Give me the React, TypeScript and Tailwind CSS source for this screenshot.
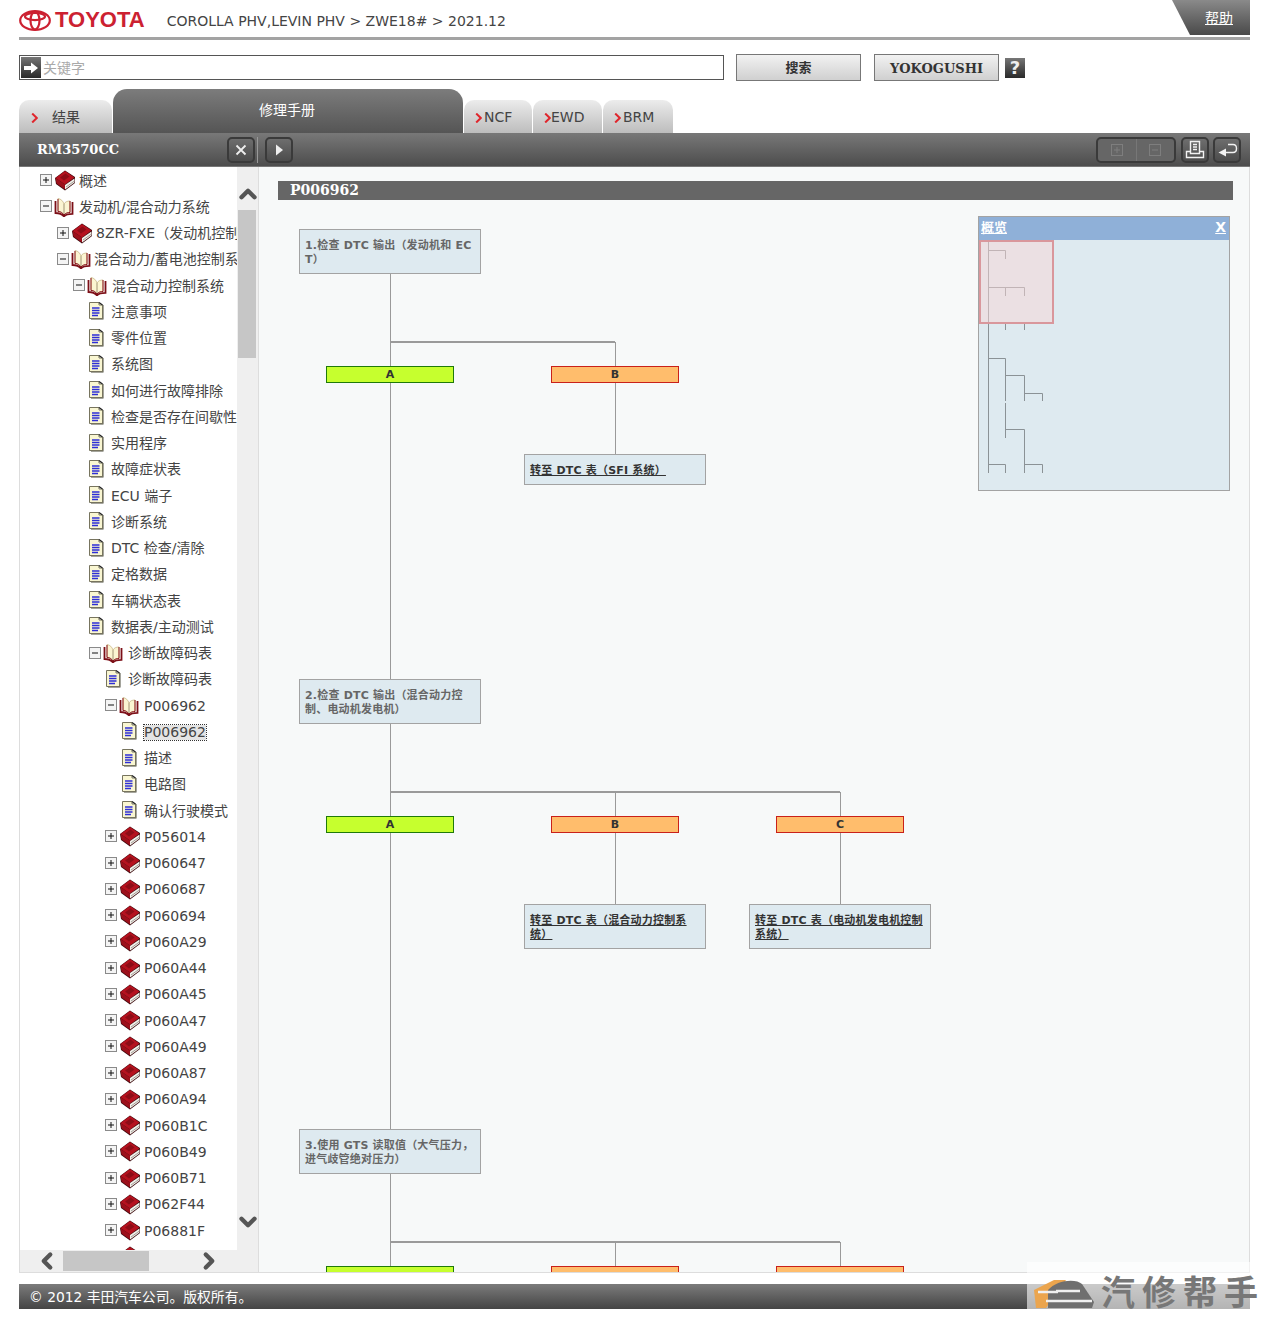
import React from "react";
import { ChevronUp, ChevronDown, ChevronLeft, ChevronRight } from "lucide-react";

type Row = { d: number; kind: "book" | "open" | "doc"; label: string; selected?: boolean };

const docs = (d: number, labels: string[]): Row[] => labels.map((label) => ({ d, kind: "doc", label }));
const books = (labels: string[]): Row[] => labels.map((label) => ({ d: 4, kind: "book", label }));

const rows: Row[] = [
  { d: 0, kind: "book", label: "概述" },
  { d: 0, kind: "open", label: "发动机/混合动力系统" },
  { d: 1, kind: "book", label: "8ZR-FXE（发动机控制" },
  { d: 1, kind: "open", label: "混合动力/蓄电池控制系" },
  { d: 2, kind: "open", label: "混合动力控制系统" },
  ...docs(2, ["注意事项", "零件位置", "系统图", "如何进行故障排除", "检查是否存在间歇性", "实用程序", "故障症状表", "ECU 端子", "诊断系统", "DTC 检查/清除", "定格数据", "车辆状态表", "数据表/主动测试"]),
  { d: 3, kind: "open", label: "诊断故障码表" },
  { d: 3, kind: "doc", label: "诊断故障码表" },
  { d: 4, kind: "open", label: "P006962" },
  { d: 4, kind: "doc", label: "P006962", selected: true },
  ...docs(4, ["描述", "电路图", "确认行驶模式"]),
  ...books(["P056014", "P060647", "P060687", "P060694", "P060A29", "P060A44", "P060A45", "P060A47", "P060A49", "P060A87", "P060A94", "P060B1C", "P060B49", "P060B71", "P062F44", "P06881F", ""]),
];

const Expander = ({ open }: { open: boolean }) => (
  <svg width="12" height="12" viewBox="0 0 12 12" className="shrink-0">
    <rect x="0.5" y="0.5" width="11" height="11" fill="#f4f4f4" stroke="#8a8a8a" />
    <path d="M3 6h6" stroke="#111" />
    {!open && <path d="M6 3v6" stroke="#111" />}
  </svg>
);

const BookIcon = () => (
  <svg width="22" height="21" viewBox="0 0 22 21" className="shrink-0">
    <path d="M1 8 L11 0.5 L21 7 L21 13 L11 20.5 L2 14 Z" fill="#3a0a0e" />
    <path d="M1.5 8 L11 1 L20.5 7.5 L11 14.5 Z" fill="#b5121f" />
    <path d="M6 7.5 L11.5 3.5 L15.5 6.5 L10 10.5 Z" fill="#8c0d17" />
    <path d="M1.5 8 L11 14.5 L11 19.5 L2.5 13.5 Z" fill="#9c101b" />
    <path d="M11 15 L20.5 8.5 L20.5 12.5 L11 19.5 Z" fill="#f2f0ea" />
    <path d="M12 17 L20 11.3" stroke="#8f8b84" strokeWidth="0.8" />
  </svg>
);

const OpenBookIcon = () => (
  <svg width="20" height="20" viewBox="0 0 20 20" className="shrink-0">
    <path d="M4 1.5 C7 2 9 4 10 7 C11 5 13 4 16 4 L16 15.5 C13.5 15.5 11.5 16 10 18 C8.5 15.5 7 14.5 4 14.5 Z" fill="#fbf5d2" stroke="#c9b98a" strokeWidth="0.8" />
    <path d="M10 7 V18" stroke="#8c7a5c" strokeWidth="0.8" />
    <path d="M4 2 V14.5 C7 14.5 8.5 16 10 18 C11.5 16 14 15.5 16 15.5 V4" fill="none" stroke="#8a1119" strokeWidth="1" />
    <path d="M1.5 4 V16 C5 16 8 17 10 19.3 C12 17 15 16.8 18.5 16.8 V5" fill="none" stroke="#7c0f17" strokeWidth="1.8" />
  </svg>
);

const DocIcon = () => (
  <svg width="15" height="18" viewBox="0 0 15 18" className="shrink-0">
    <path d="M2 17.5 H14.5 V3 H12.5 V16 H2 Z" fill="#4a4a3a" />
    <path d="M0.5 0.5 H10 L10 3 L13.5 3 V16.5 H0.5 Z" fill="#f9f6d2" stroke="#77745e" />
    <path d="M10 0.5 L13.5 3" stroke="#222" strokeWidth="1.2" />
    <path d="M3 6 H10.5 M3 8.5 H10.5 M3 11 H10.5 M3 13.5 H9" stroke="#2e2fd6" strokeWidth="1.5" />
  </svg>
);

const TreeRow = ({ row }: { row: Row }) => {
  const indent = [
    "pl-[20px]",
    "pl-[37px]",
    row.kind === "doc" ? "pl-[52px]" : "pl-[53px]",
    "pl-[69px]",
    "pl-[85px]",
  ][row.d];
  return (
    <div className={`flex h-[26.25px] items-center whitespace-nowrap ${indent}`}>
      {row.kind === "doc" ? (
        <>
          <span className="-mt-[2px] ml-[17px] mr-[7px] flex"><DocIcon /></span>
          <span className={row.selected ? "bg-[#e4e4e4] leading-[15px] outline-dotted outline-1 outline-[#333]" : ""}>{row.label}</span>
        </>
      ) : (
        <>
          <span className="-mt-[2px] flex"><Expander open={row.kind === "open"} /></span>
          <span className="-mt-[1px] ml-[2px] mr-[3px] flex w-[22px]">{row.kind === "book" ? <BookIcon /> : <OpenBookIcon />}</span>
          {row.label && <span>{row.label}</span>}
        </>
      )}
    </div>
  );
};

const ToolButton = ({ children, className = "" }: { children: React.ReactNode; className?: string }) => (
  <div className={`flex h-[26px] items-center justify-center rounded-[5px] border-2 border-[#3a3a3a] bg-linear-to-b from-[#6e6e6e] to-[#4c4c4c] ${className}`}>
    {children}
  </div>
);

const Tab = ({ label, className, gap }: { label: string; className: string; gap: string }) => (
  <div className={`flex h-[33px] items-center rounded-t-[10px] bg-linear-to-b from-[#ececec] to-[#bdbdbd] pt-[2px] text-[14px] text-[#444] ${className}`}>
    <svg width="7" height="10" viewBox="0 0 7 10" className={`shrink-0 ${gap}`}>
      <path d="M1.2 0.5 L5.8 5 L1.2 9.5" fill="none" stroke="#e0252c" strokeWidth="2" />
    </svg>
    {label}
  </div>
);

const VLine = ({ className }: { className: string }) => <div className={`absolute w-px bg-[#9a9a9a] ${className}`} />;

const Answer = ({ label, className }: { label?: string; className: string }) => (
  <div className={`absolute top-[137px] flex h-[17px] w-[128px] items-center justify-center border pt-[2px] text-[11px] font-bold text-[#333] ${className}`}>
    {label}
  </div>
);

const StepNode = ({ children }: { children: React.ReactNode }) => (
  <div className="absolute left-[40px] top-0 h-[45px] w-[182px] break-all border border-[#a3a3a3] bg-[#deeaf0] px-[5px] pt-[9px] text-[11px] font-bold leading-[14px] tracking-[0.2px] text-[#666]">
    {children}
  </div>
);

const LinkNode = ({ children, className }: { children: React.ReactNode; className: string }) => (
  <div className={`absolute top-[225px] w-[182px] break-all border border-[#a3a3a3] bg-[#deeaf0] px-[5px] pt-[9px] text-[11px] font-bold leading-[14px] tracking-[0.2px] text-[#333] underline ${className}`}>
    {children}
  </div>
);

const FlowBlock = ({ step, links, cut }: { step: string; links: string[]; cut?: boolean }) => (
  <div className="relative h-[450px]">
    <VLine className="left-[131px] top-[44px] h-[406px]" />
    <div className={`absolute left-[131px] top-[112px] h-[2px] bg-[#9a9a9a] ${links.length > 1 ? "w-[450px]" : "w-[225px]"}`} />
    <VLine className="left-[356px] top-[113px] h-[112px]" />
    {links.length > 1 && <VLine className="left-[581px] top-[113px] h-[112px]" />}
    <StepNode>{step}</StepNode>
    <Answer label={cut ? undefined : "A"} className="left-[67px] border-[#1f7a0a] bg-[#c6ff2e]" />
    <Answer label={cut ? undefined : "B"} className="left-[292px] border-[#c9211a] bg-[#ffbd6c]" />
    {links.length > 1 && <Answer label={cut ? undefined : "C"} className="left-[517px] border-[#c9211a] bg-[#ffbd6c]" />}
    {links[0] && <LinkNode className={`left-[265px] ${links.length > 1 ? "h-[45px]" : "h-[31px]"}`}>{links[0]}</LinkNode>}
    {links[1] && <LinkNode className="left-[490px] h-[45px]">{links[1]}</LinkNode>}
  </div>
);

const OverviewMap = () => (
  <svg width="250" height="250" viewBox="979 240 250 250" className="block" fill="none" stroke="#8b9296" strokeWidth="1">
    <path d="M988.5 240V473M988.5 250.5H1005.5V259M989 287.5H1024.5V296M1005.5 287V296M988.5 322.5H1024.5V330M1005.5 322V330" />
    <path d="M989 358.5H1005.5V401M1005.5 375.5H1024.5V401M1024.5 393.5H1042.5V401M1005.5 403V438M1005.5 429.5H1024.5V473M988.5 464.5H1005.5V473M1024.5 464.5H1042.5V473" />
  </svg>
);

export default function App() {
  return (
    <div className="relative h-[1322px] w-[1267px] overflow-hidden bg-white font-['DejaVu_Sans','Noto_Sans_CJK_SC',sans-serif] text-[14px] text-[#444]">
      {/* header */}
      <div className="ml-[19px] flex h-[40px] w-[1231px] items-start border-b-[3px] border-[#a3a3a3]">
        <div className="mt-[9px] flex items-center">
          <svg width="32" height="21" viewBox="0 0 32 21" fill="none" stroke="#cc2131" strokeWidth="2.2">
            <ellipse cx="16" cy="10.5" rx="14.8" ry="9.3" />
            <ellipse cx="16" cy="10.5" rx="4.5" ry="9" />
            <ellipse cx="16" cy="6.5" rx="10" ry="3.6" />
          </svg>
          <span className="ml-[4px] font-['Liberation_Sans',sans-serif] text-[22px] font-bold leading-[22px] text-[#cc2131]">TOYOTA</span>
        </div>
        <div className="ml-[22px] mt-[12px] leading-[18px] text-[#444]">COROLLA PHV,LEVIN PHV &gt; ZWE18# &gt; 2021.12</div>
        <div className="ml-auto flex h-[35px] w-[78px] items-center justify-end bg-linear-to-b from-[#8a8a8a] to-[#4a4a4a] pr-[17px] pt-[2px] text-[14px] text-white underline [clip-path:polygon(0_0,100%_0,100%_100%,18px_100%)]">
          帮助
        </div>
      </div>

      {/* search */}
      <div className="ml-[19px] mt-[14px] flex h-[27px] items-center">
        <div className="flex h-[25px] w-[705px] items-center border border-[#555] bg-white pl-px">
          <div className="flex h-[21px] w-[20px] items-center justify-center bg-linear-to-b from-[#777] to-[#2a2a2a]">
            <svg width="16" height="12" viewBox="0 0 16 12"><path d="M1 4H8V0.5L15 6L8 11.5V8H1Z" fill="#fff" /></svg>
          </div>
          <span className="ml-[2px] pt-px text-[14px] text-[#aaa]">关键字</span>
        </div>
        <div className="ml-[12px] flex h-[27px] w-[125px] items-center justify-center border border-[#777] bg-linear-to-b from-[#f2f2f2] to-[#d0d0d0] text-[13px] font-bold text-[#333]">搜索</div>
        <div className="ml-[13px] flex h-[27px] w-[125px] items-center justify-center border border-[#777] bg-linear-to-b from-[#f2f2f2] to-[#d0d0d0] pt-[2px] font-['DejaVu_Serif',serif] text-[13px] font-bold text-[#333]">YOKOGUSHI</div>
        <div className="ml-[6px] flex h-[20px] w-[20px] items-center justify-center bg-linear-to-b from-[#777] to-[#2a2a2a] text-[18px] font-bold text-[#eee]">?</div>
      </div>

      {/* tabs */}
      <div className="ml-[19px] mt-[8px] flex h-[44px] items-end">
        <div className="flex h-[33px] w-[93px] items-center rounded-t-[10px] bg-linear-to-b from-[#ececec] to-[#bdbdbd] pl-[12px] pt-[2px] text-[14px] text-[#444]">
          <svg width="7" height="10" viewBox="0 0 7 10" className="shrink-0">
            <path d="M1.2 0.5 L5.8 5 L1.2 9.5" fill="none" stroke="#e0252c" strokeWidth="2" />
          </svg>
          <span className="ml-[14px]">结果</span>
        </div>
        <div className="ml-px flex h-[44px] w-[350px] items-center justify-center rounded-t-[14px] bg-linear-to-b from-[#7c7c7c] to-[#555] pb-[2px] pr-[2px] text-[14px] text-white">修理手册</div>
        <Tab label="NCF" className="ml-px w-[68px] pl-[11px]" gap="mr-[2px]" />
        <Tab label="EWD" className="ml-px w-[69px] pl-[11px] text-[13.5px]" gap="mr-0" />
        <Tab label="BRM" className="ml-px w-[70px] pl-[11px] text-[13.5px]" gap="mr-[2px]" />
      </div>

      {/* toolbar */}
      <div className="ml-[19px] flex h-[34px] w-[1231px] items-center border-y border-[#777] bg-linear-to-b from-[#777] to-[#4d4d4d]">
        <div className="flex w-[239px] items-center border-r border-[#999]">
          <span className="ml-[18px] font-['DejaVu_Serif',serif] text-[13px] font-bold text-white">RM3570CC</span>
          <ToolButton className="ml-auto mr-[2px] w-[28px]">
            <svg width="12" height="12" viewBox="0 0 12 12"><path d="M1.5 1.5L10.5 10.5M10.5 1.5L1.5 10.5" stroke="#eee" strokeWidth="1.8" /></svg>
          </ToolButton>
        </div>
        <ToolButton className="ml-[7px] w-[28px]">
          <svg width="9" height="12" viewBox="0 0 9 12"><path d="M1 0.5L8 6L1 11.5Z" fill="#eee" /></svg>
        </ToolButton>
        <div className="ml-auto mr-[9px] flex items-center">
          <div className="flex h-[26px] w-[80px] rounded-[5px] border-2 border-[#3a3a3a] bg-[#666]">
            <div className="flex flex-1 items-center justify-center border-r border-[#777]">
              <svg width="12" height="12" viewBox="0 0 12 12" fill="none" stroke="#7e7e7e"><rect x="0.5" y="0.5" width="11" height="11" /><path d="M3 6H9M6 3V9" /></svg>
            </div>
            <div className="flex flex-1 items-center justify-center">
              <svg width="12" height="12" viewBox="0 0 12 12" fill="none" stroke="#7e7e7e"><rect x="0.5" y="0.5" width="11" height="11" /><path d="M3 6H9" /></svg>
            </div>
          </div>
          <ToolButton className="ml-[5px] w-[28px]">
            <svg width="20" height="20" viewBox="0 0 20 20" fill="none" stroke="#f2f2f2" strokeWidth="1.4">
              <path d="M5.5 11V1.5H14.5V11" />
              <path d="M1.5 11.5H5.5V13.5H14.5V11.5H18.5V17.5H1.5Z" />
              <path d="M8 4.5H12M8 7H12M8 9.5H12" />
            </svg>
          </ToolButton>
          <ToolButton className="ml-[4px] w-[28px]">
            <svg width="22" height="16" viewBox="0 0 22 16" fill="none">
              <path d="M12 2.5H17C19.5 2.5 20.5 4.5 20.5 6.5C20.5 9 19 10.5 17 10.5H9" stroke="#f2f2f2" strokeWidth="1.4" />
              <path d="M10 6.5L2.5 10.5L10 14.5Z" fill="#f2f2f2" />
            </svg>
          </ToolButton>
        </div>
      </div>

      {/* main */}
      <div className="ml-[19px] flex h-[1106px] w-[1231px] border-x border-b border-[#ddd]">
        <div className="flex h-full w-[239px] shrink-0 flex-col border-r border-[#ddd]">
          <div className="flex h-[1083px]">
            <div className="w-[217px] overflow-hidden pt-px">
              {rows.map((row, i) => (
                <TreeRow key={i} row={row} />
              ))}
            </div>
            <div className="flex w-[21px] flex-col bg-[#efefef]">
              <div className="flex h-[43px] w-[21px] items-end justify-center pb-[3px]">
                <ChevronUp size={26} strokeWidth={4} className="shrink-0 text-[#555]" />
              </div>
              <div className="ml-px h-[148px] w-[18px] bg-[#c6c6c6]" />
              <div className="mt-auto flex h-[44px] w-[21px] items-start justify-center pt-[3px]">
                <ChevronDown size={26} strokeWidth={4} className="shrink-0 text-[#555]" />
              </div>
            </div>
          </div>
          <div className="flex h-[22px] items-center bg-[#efefef]">
            <div className="flex w-[43px] justify-end pr-[3px]">
              <ChevronLeft size={26} strokeWidth={4} className="shrink-0 text-[#555]" />
            </div>
            <div className="h-[20px] w-[86px] bg-[#c6c6c6]" />
            <div className="ml-[47px] flex">
              <ChevronRight size={26} strokeWidth={4} className="shrink-0 text-[#555]" />
            </div>
          </div>
        </div>

        <div className="relative flex-1 overflow-hidden bg-[#f7f9f9]">
          <div className="ml-[19px] mt-[14px] flex h-[19px] w-[955px] items-center bg-[#666] pl-[12px] font-['DejaVu_Serif',serif] text-[14px] font-bold text-white">P006962</div>
          <div className="mt-[29px]">
            <FlowBlock step="1.检查 DTC 输出（发动机和 ECT）" links={["转至 DTC 表（SFI 系统）"]} />
            <FlowBlock step="2.检查 DTC 输出（混合动力控制、电动机发电机）" links={["转至 DTC 表（混合动力控制系统）", "转至 DTC 表（电动机发电机控制系统）"]} />
            <FlowBlock step="3.使用 GTS 读取值（大气压力，进气歧管绝对压力）" links={["", ""]} cut />
          </div>

          {/* overview window */}
          <div className="absolute left-[719px] top-[49px] h-[275px] w-[252px] border border-[#a3a3a3] bg-[#deeaf0]">
            <div className="flex h-[23px] items-center justify-between bg-[#8fb0d8] px-[2px] pb-[2px] text-[13px] font-bold text-white">
              <span className="underline">概览</span>
              <span className="pr-px text-[14px] underline">X</span>
            </div>
            <OverviewMap />
            <div className="absolute left-0 top-[23px] h-[84px] w-[75px] border-2 border-[#d9979c] bg-[#f7d5d5]/50" />
          </div>
        </div>
      </div>

      {/* footer */}
      <div className="ml-[19px] mt-[11px] flex h-[25px] w-[1231px] items-center bg-linear-to-b from-[#7c7c7c] to-[#454545] pl-[10px] pt-px text-[13.8px] text-white">
        © 2012 丰田汽车公司。版权所有。
      </div>

      {/* watermark */}
      <div className="absolute left-[1027px] top-[1262px] flex h-[48px] w-[238px] items-end">
        <div className="absolute left-0 top-0 h-[47px] w-[223px] bg-white/60" />
        <svg width="72" height="32" viewBox="0 0 72 32" className="relative ml-[5px] shrink-0">
          <path d="M2 12 L22 2 L34 2 L14 30 L4 30 Z" fill="#eba54e" />
          <path d="M16 12 C24 2 44 0 50 6 L62 24 L60 30 L16 30 Z" fill="#6f6f6f" />
          <path d="M24 13H48M6 14H26M14 23H60" stroke="#f0f0f0" strokeWidth="2.5" />
        </svg>
        <span className="relative -ml-[3px] whitespace-nowrap text-[34px] font-bold leading-[34px] tracking-[7px] text-[#777]">汽修帮手</span>
      </div>
    </div>
  );
}
